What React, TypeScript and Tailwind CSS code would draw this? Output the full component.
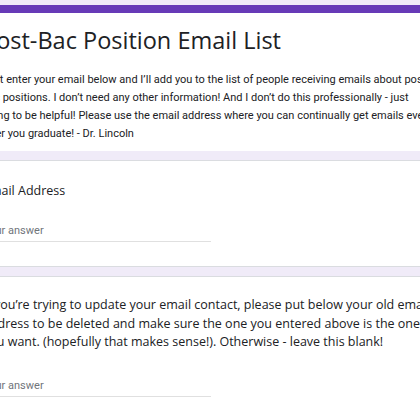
export default function App() {
  const desc = [
    'Just enter your email below and I\u2019ll add you to the list of people receiving emails about post-bac',
    'bac positions. I don\u2019t need any other information! And I don\u2019t do this professionally - just',
    'trying to be helpful! Please use the email address where you can continually get emails even',
    'after you graduate! - Dr. Lincoln',
  ];
  const question = [
    'If you\u2019re trying to update your email contact, please put below your old email',
    'address to be deleted and make sure the one you entered above is the one',
    'you want. (hopefully that makes sense!). Otherwise - leave this blank!',
  ];

  return (
    <div className="min-h-[420px] overflow-hidden bg-[#f0ebf8] pt-[5px]">
      <div className="ml-[-38px] flex w-[520px] flex-col gap-[9px]">
        {/* header */}
        <div className="rounded-lg border-t-[8px] border-[#673ab7] bg-white px-[20px] pb-[8px] pt-[11px]">
          <h1 className="text-[23.5px] leading-[32px] text-[#202124] font-['Open_Sans',sans-serif]">
            Post-Bac Position Email List
          </h1>
          <div className="mt-[15px] text-[11px] leading-[18px] text-[#202124] font-['Roboto',sans-serif]">
            {desc.map((line) => (
              <div key={line} className="whitespace-nowrap">{line}</div>
            ))}
          </div>
        </div>

        {/* email */}
        <div className="rounded-lg border border-[#dadce0] bg-white px-[20px] pb-[24px] pt-[20px]">
          <div className="text-[12.5px] leading-[19px] text-[#202124] font-['Open_Sans',sans-serif]">Email Address</div>
          <div className="mt-[24px] w-[228px] border-b border-[#e0e0e0] pb-[3px] text-[11px] leading-[14px] text-[#70757a] font-['Roboto',sans-serif]">
            Your answer
          </div>
        </div>

        {/* old email */}
        <div className="rounded-lg border border-[#dadce0] bg-white px-[20px] pb-[25px] pt-[19px]">
          <div className="text-[12.5px] leading-[18.5px] text-[#202124] font-['Open_Sans',sans-serif]">
            {question.map((line) => (
              <div key={line} className="whitespace-nowrap">{line}</div>
            ))}
          </div>
          <div className="mt-[27px] w-[228px] border-b border-[#e0e0e0] pb-[3px] text-[11px] leading-[14px] text-[#70757a] font-['Roboto',sans-serif]">
            Your answer
          </div>
        </div>
      </div>
    </div>
  );
}
